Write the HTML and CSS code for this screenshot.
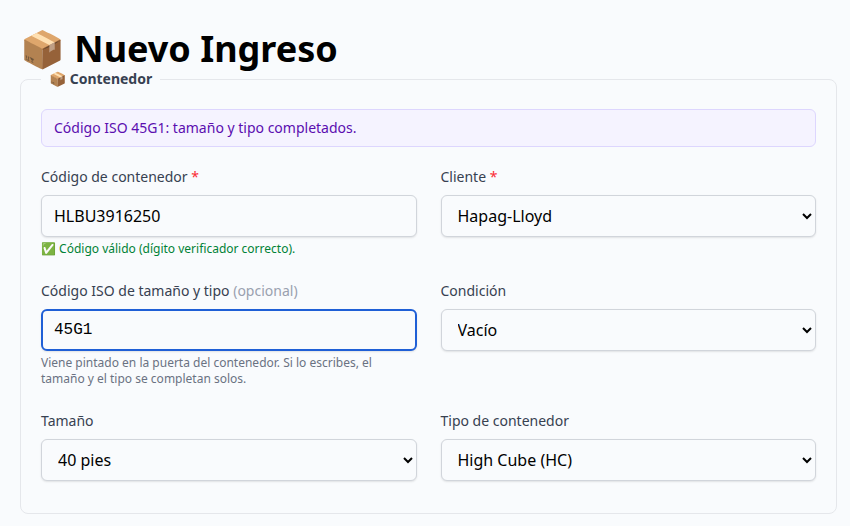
FILE: index.html
```html
<!DOCTYPE html>
<html lang="es">
<head>
	<meta charset="utf-8">
	<meta name="viewport" content="width=device-width, initial-scale=1">
	<title>Nuevo Ingreso</title>
	<link rel="stylesheet" href="styles.css">
</head>
<body>
	<h1>📦 Nuevo Ingreso</h1>
	<form>
		<fieldset>
			<legend>📦 Contenedor</legend>
			<div class="aviso" role="status">Código ISO 45G1: tamaño y tipo completados.</div>
			<div class="grid">
				<div class="campo">
					<label for="codigo">Código de contenedor <span class="req">*</span></label>
					<input type="text" id="codigo" value="HLBU3916250">
					<p class="ayuda ok">✅ Código válido (dígito verificador correcto).</p>
				</div>
				<div class="campo">
					<label for="cliente">Cliente <span class="req">*</span></label>
					<select id="cliente">
						<option>Hapag-Lloyd</option>
					</select>
				</div>
				<div class="campo">
					<label for="iso">Código ISO de tamaño y tipo <span class="opcional">(opcional)</span></label>
					<input type="text" id="iso" class="mono activo" value="45G1">
					<p class="ayuda">Viene pintado en la puerta del contenedor. Si lo escribes, el tamaño y el tipo se completan solos.</p>
				</div>
				<div class="campo">
					<label for="condicion">Condición</label>
					<select id="condicion">
						<option>Vacío</option>
					</select>
				</div>
				<div class="campo">
					<label for="tamano">Tamaño</label>
					<select id="tamano">
						<option>40 pies</option>
					</select>
				</div>
				<div class="campo">
					<label for="tipo">Tipo de contenedor</label>
					<select id="tipo">
						<option>High Cube (HC)</option>
					</select>
				</div>
			</div>
		</fieldset>
	</form>
</body>
</html>
```
FILE: styles.css
```css
*{
	box-sizing: border-box;
}
body{
	margin: 0;
	padding: 29px 13px 12px 20px;
	background: #f9fbfd;
	color: #000;
	font: 16px/24px "Noto Sans", sans-serif;
}
h1{
	margin: 0;
	font-size: 36px;
	line-height: 40px;
	font-weight: 700;
}
fieldset{
	margin: 0;
	min-width: 0;
	padding: 20px 20px 32px;
	border: 1px solid #e5e7eb;
	border-radius: 8px;
}
legend{
	padding: 0 8px;
	color: #374151;
	font-size: 14px;
	line-height: 20px;
	font-weight: 700;
}
.aviso{
	margin-bottom: 20px;
	padding: 8px 12px;
	border: 1px solid #ddd6fe;
	border-radius: 6px;
	background: #f5f3ff;
	color: #5b0eb0;
	font-size: 14px;
	line-height: 20px;
}
.grid{
	display: grid;
	grid-template-columns: 1fr 1fr;
	gap: 24px;
}
label{
	display: block;
	margin-bottom: 8px;
	color: #374151;
	font-size: 14px;
	line-height: 20px;
}
.req{
	color: #fb2c36;
}
.opcional{
	color: #99a1af;
}
input, select{
	display: block;
	width: 100%;
	height: 42px;
	padding: 8px 12px;
	border: 1px solid #d1d5db;
	border-radius: 6px;
	background: #f9fbfd;
	color: #000;
	font: 16px/24px "Noto Sans", sans-serif;
	box-shadow: 0 1px 2px rgba(0, 0, 0, .1);
}
.mono{
	font-family: "Liberation Mono", monospace;
}
.activo{
	padding: 7px 11px;
	border: 2px solid #1f5fd6;
	outline: none;
}
.ayuda{
	margin: 4px 0 0;
	color: #6a7282;
	font-size: 12px;
	line-height: 16px;
}
.ok{
	color: #008236;
}
```
